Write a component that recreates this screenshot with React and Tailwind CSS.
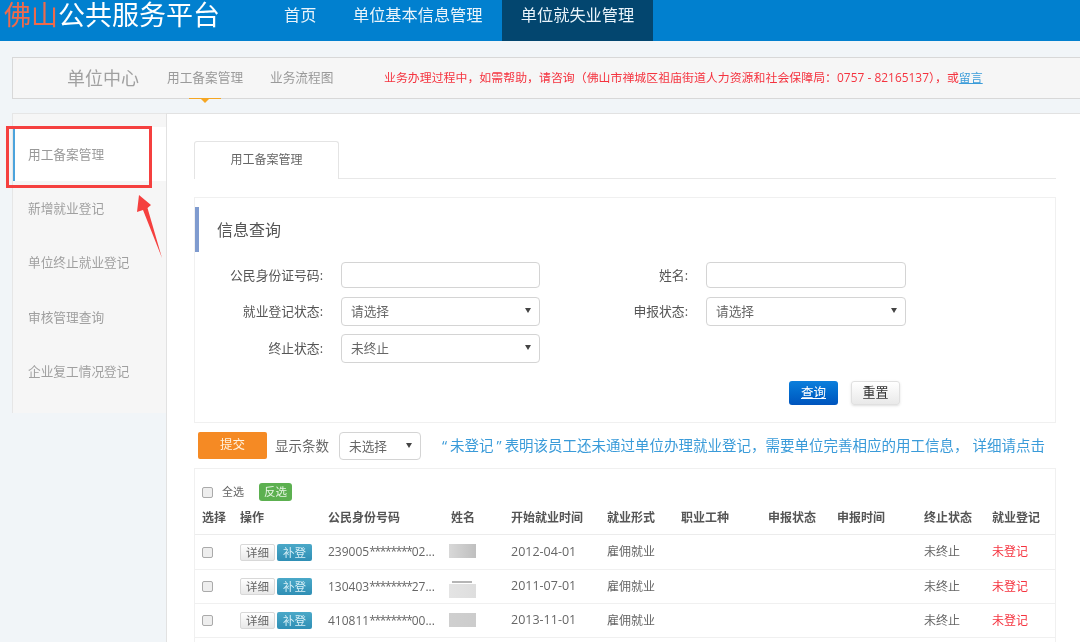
const FONT = "font-['Open_Sans','Noto_Sans_CJK_SC',sans-serif]";

function Select({ value, className = "" }) {
  return (
    <div className={`flex items-center justify-between rounded-[4px] border border-[#d4d4d4] bg-white pl-[9px] pr-[8px] text-[12.7px] text-[#666] ${className}`}>
      <span className="pt-[1px]">{value}</span>
      <svg width="6" height="5" viewBox="0 0 6 5" className="mb-[2px]"><path d="M0 0h6L3 5z" fill="#444" /></svg>
    </div>
  );
}

function Field({ label, className = "", children }) {
  return (
    <div className={`flex items-center ${className}`}>
      <label className="w-[128px] pt-[1px] text-right text-[12.8px] text-[#555]">{label}</label>
      <div className="ml-[18px]">{children}</div>
    </div>
  );
}

function Check() {
  return <input type="checkbox" className="h-[11px] w-[11px] appearance-none rounded-[2px] border border-[#aaa] bg-[#eeeeee]" />;
}

const GRID = "grid grid-cols-[38px_88px_123px_60px_96px_74px_87px_69px_87px_68px_1fr] items-center pl-[7px]";

const rows = [
  { a: "239005", b: "02...", date: "2012-04-01", blur: "from-[#d8d8d8] to-[#bfbfbf]", h: "h-[35px]", blurMt: "mt-[-2px]" },
  { a: "130403", b: "27...", date: "2011-07-01", blur: "from-[#e4e4e4] to-[#dedede]", h: "h-[34px]", blurMt: "mt-[8px]", mark: true },
  { a: "410811", b: "00...", date: "2013-11-01", blur: "from-[#cfcfcf] to-[#cccccc]", h: "h-[34px]", blurMt: "mt-[-2px]" },
];

export default function App() {
  return (
    <div className={`relative h-[642px] w-[1080px] overflow-hidden bg-[#f1f5f8] blur-[0.3px] ${FONT}`}>
      {/* header */}
      <header className="flex h-[41px] items-start bg-[#0180cf]">
        <div className="mt-[-4px] w-[284px] whitespace-nowrap pl-[4px] text-[27px] leading-[38px] text-white">
          <span className="text-[#ee6a4c]">佛山</span>公共服务平台
        </div>
        <nav className="flex h-full items-start text-[16.2px] text-[#eaf4fb]">
          <a className="mt-[3px] w-[69px] leading-[24px]">首页</a>
          <a className="mt-[3px] w-[149px] leading-[24px]">单位基本信息管理</a>
          <a className="flex h-full w-[151px] justify-center bg-[#03466f] pt-[3px] leading-[24px]">单位就失业管理</a>
        </nav>
      </header>

      {/* sub bar */}
      <div className="relative mt-[16px] ml-[12px] flex h-[42px] items-center border border-r-0 border-[#d8d8d8] bg-[#f6f6f6] pl-[54px]">
        <span className="w-[100px] text-[18px] text-[#a0a0a0]">单位中心</span>
        <span className="w-[103px] text-[12.7px] text-[#9a9a9a]">用工备案管理</span>
        <span className="w-[114px] text-[12.7px] text-[#9a9a9a]">业务流程图</span>
        <span className="whitespace-nowrap text-[11.9px] tracking-[0.03px] text-[#f5333f]">
          业务办理过程中，如需帮助，请咨询（佛山市禅城区祖庙街道人力资源和社会保障局：0757 - 82165137），或<span className="text-[#3b9cd9] underline">留言</span>
        </span>
        <span className="absolute left-[176px] top-[40px] h-[1px] w-[32px] bg-[#f5a623]" />
        <span className="absolute left-[188px] top-[41px] h-0 w-0 border-x-[4px] border-t-[4px] border-x-transparent border-t-[#f5a623]" />
      </div>

      {/* body */}
      <div className="mt-[14px] ml-[12px] flex h-[529px] items-stretch">
        {/* sidebar */}
        <aside className="h-[300px] w-[154px] border-t border-l border-[#e6e6e6] bg-[#f6f6f6] pt-[13px] text-[12.7px] text-[#a0a0a0]">
          <div className="flex h-[54px] items-center border-l-2 border-[#4ba3dc] bg-white pt-[2px] pl-[13px] text-[#999]">用工备案管理</div>
          <div className="flex h-[54px] items-center pt-[2px] pl-[15px]">新增就业登记</div>
          <div className="flex h-[54px] items-center pt-[2px] pl-[15px]">单位终止就业登记</div>
          <div className="flex h-[55px] items-center pt-[2px] pl-[15px]">审核管理查询</div>
          <div className="flex h-[54px] items-center pt-[2px] pl-[15px]">企业复工情况登记</div>
        </aside>

        {/* main */}
        <main className="flex-1 border-t border-l border-[#e2e2e2] bg-white pt-[27px] pr-[24px] pl-[27px]">
          {/* tab */}
          <div className="h-[38px] border-b border-[#e8e8e8]">
            <div className="flex h-[38px] w-[145px] items-center justify-center rounded-t-[3px] border border-b-0 border-[#e4e4e4] bg-white pb-[2px] text-[12px] text-[#666]">用工备案管理</div>
          </div>

          {/* query panel */}
          <section className="mt-[18px] h-[226px] border border-[#f0f0f0] pt-[9px]">
            <div className="flex h-[45px] items-center border-l-4 border-[#7f9bcf] pl-[18px] text-[16px] text-[#555]">信息查询</div>
            <div className="mt-[10px] flex">
              <Field label="公民身份证号码:" className="w-[365px]">
                <input className="block h-[26px] w-[199px] rounded-[4px] border border-[#d4d4d4] bg-white" />
              </Field>
              <Field label="姓名:">
                <input className="block h-[26px] w-[200px] rounded-[4px] border border-[#d4d4d4] bg-white" />
              </Field>
            </div>
            <div className="mt-[9px] flex">
              <Field label="就业登记状态:" className="w-[365px]">
                <Select value="请选择" className="h-[29px] w-[199px]" />
              </Field>
              <Field label="申报状态:">
                <Select value="请选择" className="h-[29px] w-[200px]" />
              </Field>
            </div>
            <div className="mt-[8px]">
              <Field label="终止状态:">
                <Select value="未终止" className="h-[29px] w-[199px]" />
              </Field>
            </div>
            <div className="mt-[18px] flex gap-[13px] pl-[594px]">
              <button className="h-[24px] w-[49px] rounded-[3px] bg-gradient-to-b from-[#0c7fdc] to-[#0054bd] text-[12.5px] text-white underline">查询</button>
              <button className="h-[24px] w-[49px] rounded-[3px] border border-[#e0e0e0] bg-gradient-to-b from-white to-[#e9e9e9] text-[13px] text-[#333] shadow-sm">重置</button>
            </div>
          </section>

          {/* toolbar */}
          <div className="mt-[9px] flex h-[28px] items-start pl-[4px]">
            <button className="h-[27px] w-[69px] rounded-[2px] bg-[#f58a24] text-[12.5px] text-[#fff3e0]">提交</button>
            <span className="mt-[4px] ml-[8px] text-[13.5px] text-[#666]">显示条数</span>
            <Select value="未选择" className="ml-[10px] h-[28px] w-[82px]" />
            <span className="mt-[3px] ml-[20px] whitespace-nowrap text-[14.5px] text-[#3a9bd9]"><span className="pr-[3px] pl-[1px]">“</span>未登记<span className="pr-[3px] pl-[3px]">”</span>表明该员工还未通过单位办理就业登记，需要单位完善相应的用工信息， 详细请点击</span>
          </div>

          {/* table */}
          <section className="mt-[8px] h-[180px] border border-[#f0f0f0]">
            <div className="flex h-[36px] items-center pt-[10px] pl-[7px]">
              <Check />
              <span className="ml-[9px] text-[11px] text-[#666]">全选</span>
              <span className="ml-[15px] flex h-[18px] w-[33px] items-center justify-center rounded-[3px] bg-[#5cb050] text-[11.5px] text-[#e6f5e2]">反选</span>
            </div>
            <div className={`${GRID} h-[30px] border-b border-[#ececec] pb-[3px] text-[12px] font-bold text-[#555]`}>
              <span>选择</span><span>操作</span><span>公民身份号码</span><span>姓名</span><span>开始就业时间</span><span>就业形式</span><span>职业工种</span><span>申报状态</span><span>申报时间</span><span>终止状态</span><span>就业登记</span>
            </div>
            {rows.map((r) => (
              <div key={r.a} className={`${GRID} ${r.h} border-b border-[#f0f0f0] text-[12px] text-[#666]`}>
                <span className="flex"><Check /></span>
                <span className="flex gap-[2px]">
                  <button className="h-[17px] w-[35px] rounded-[2px] border border-[#d8d8d8] bg-gradient-to-b from-white to-[#e8e8e8] text-[11.5px] leading-[15px] text-[#666]">详细</button>
                  <button className="h-[17px] w-[35px] rounded-[2px] bg-gradient-to-b from-[#4aa8c8] to-[#2f8fb5] text-[11.5px] leading-[17px] text-[#d9f0f7]">补登</button>
                </span>
                <span className="whitespace-nowrap text-[12px]">{r.a}<span className="tracking-[-1.3px]">********</span>{r.b}</span>
                <span className={`${r.blurMt} relative ml-[-2px] block h-[14px] w-[27px] bg-gradient-to-r ${r.blur} blur-[0.6px]`}>
                  {r.mark && <span className="absolute top-[-3px] left-[3px] h-[2px] w-[20px] bg-[#b5b5b5]" />}
                </span>
                <span className="text-[12.5px]">{r.date}</span>
                <span>雇佣就业</span>
                <span /><span /><span />
                <span>未终止</span>
                <span className="text-[#f5333f]">未登记</span>
              </div>
            ))}
          </section>
        </main>
      </div>

      {/* annotation: red box */}
      <div className="pointer-events-none absolute top-[126px] left-[6px] h-[62px] w-[146px] border-[3px] border-[#f5403f]" />
      {/* annotation: red arrow */}
      <svg className="pointer-events-none absolute top-[193px] left-[134px]" width="32" height="68" viewBox="0 0 32 68">
        <path d="M5 2 L17 12 L13.5 15 L28 65 L9 17 L3 19 Z" fill="#f5403f" />
      </svg>
    </div>
  );
}
